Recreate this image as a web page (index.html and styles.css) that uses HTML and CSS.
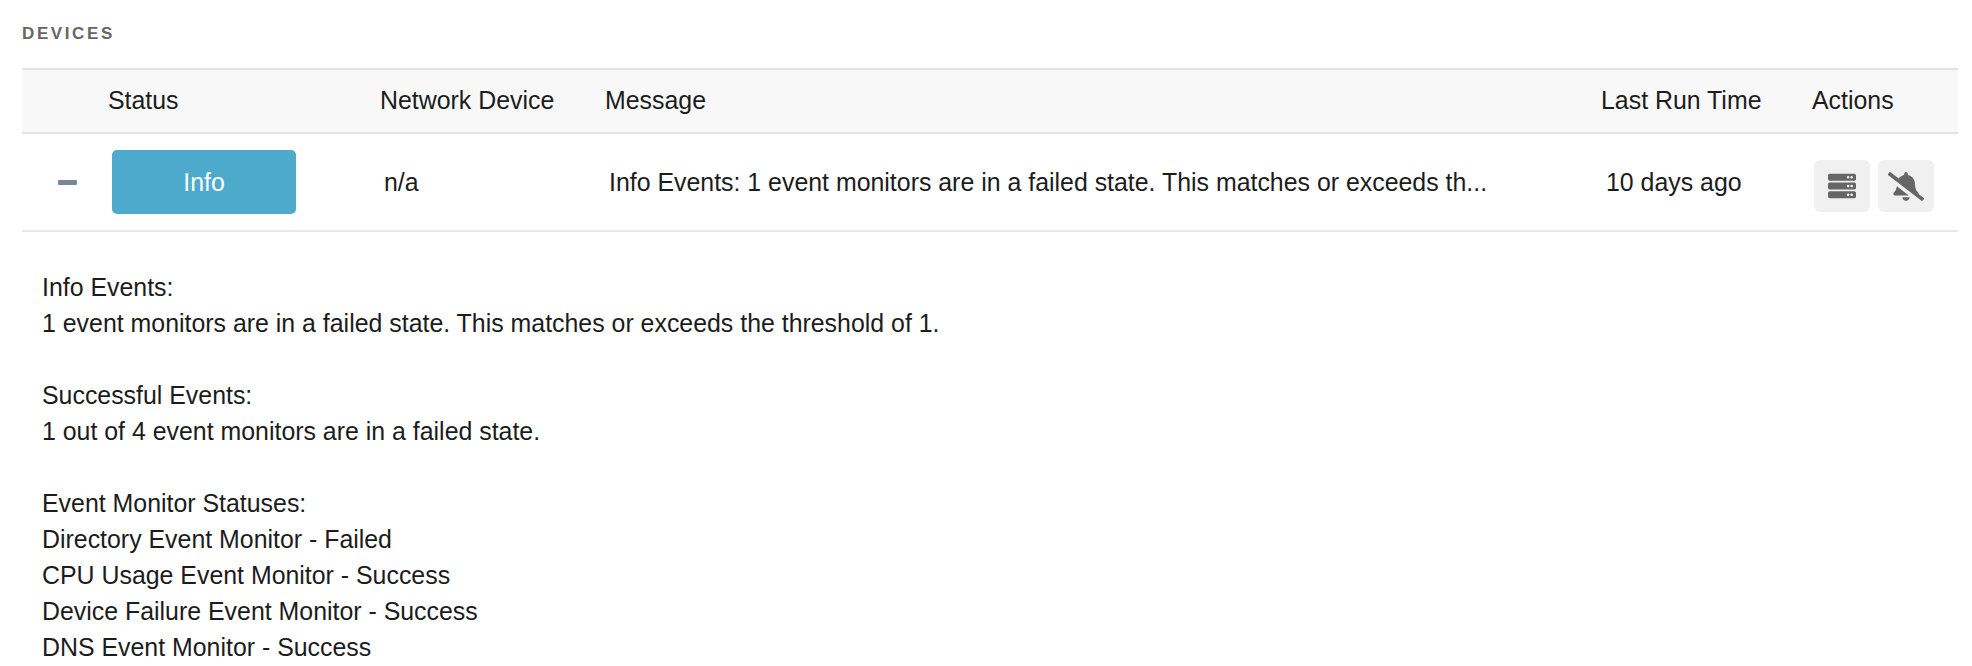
FILE: index.html
```html
<!DOCTYPE html>
<html lang="en">

<head>
    <meta charset="UTF-8">
    <title>Devices</title>

    <link rel="stylesheet" href="styles.css">

</head>

<body>
    <h2 class="titel">DEVICES</h2>
    <table class="devices">
        <colgroup>
            <col class="kol-toggle">
            <col class="kol-status">
            <col class="kol-device">
            <col class="kol-message">
            <col class="kol-time">
            <col>
        </colgroup>
        <thead>
            <tr>
                <th></th>
                <th>Status</th>
                <th>Network Device</th>
                <th>Message</th>
                <th>Last Run Time</th>
                <th>Actions</th>
            </tr>
        </thead>
        <tbody>
            <tr>
                <td><span class="collapse"></span></td>
                <td><span class="badge">Info</span></td>
                <td>n/a</td>
                <td>Info Events: 1 event monitors are in a failed state. This matches or exceeds th...</td>
                <td class="tid">10 days ago</td>
                <td>
                    <div class="actions">
                        <button class="action" aria-label="Devices">
                            <svg class="ikon-server" viewBox="0 0 512 512">
                                <path d="M480 160H32c-17.673 0-32-14.327-32-32V64c0-17.673 14.327-32 32-32h448c17.673 0 32 14.327 32 32v64c0 17.673-14.327 32-32 32zm-48-88c-13.255 0-24 10.745-24 24s10.745 24 24 24 24-10.745 24-24-10.745-24-24-24zm-64 0c-13.255 0-24 10.745-24 24s10.745 24 24 24 24-10.745 24-24-10.745-24-24-24zm112 248H32c-17.673 0-32-14.327-32-32v-64c0-17.673 14.327-32 32-32h448c17.673 0 32 14.327 32 32v64c0 17.673-14.327 32-32 32zm-48-88c-13.255 0-24 10.745-24 24s10.745 24 24 24 24-10.745 24-24-10.745-24-24-24zm-64 0c-13.255 0-24 10.745-24 24s10.745 24 24 24 24-10.745 24-24-10.745-24-24-24zm112 248H32c-17.673 0-32-14.327-32-32v-64c0-17.673 14.327-32 32-32h448c17.673 0 32 14.327 32 32v64c0 17.673-14.327 32-32 32zm-48-88c-13.255 0-24 10.745-24 24s10.745 24 24 24 24-10.745 24-24-10.745-24-24-24zm-64 0c-13.255 0-24 10.745-24 24s10.745 24 24 24 24-10.745 24-24-10.745-24-24-24z"/>
                            </svg>
                        </button>
                        <button class="action" aria-label="Mute">
                            <svg class="ikon-bell" viewBox="0 0 640 512">
                                <path d="M633.82 458.1l-90.62-70.05c.19-1.38.8-2.66.8-4.05.05-7.55-2.61-15.27-8.61-21.71-19.32-20.76-55.47-51.99-55.47-154.29 0-77.7-54.48-139.9-127.94-155.16V32c0-17.67-14.32-32-31.98-32s-31.98 14.33-31.98 32v20.84c-40.33 8.38-74.66 31.07-97.59 62.57L45.47 3.37C38.49-2.05 28.43-.8 23.01 6.18L3.37 31.45C-2.05 38.42-.8 48.47 6.18 53.9l588.35 454.73c6.98 5.43 17.03 4.17 22.46-2.81l19.64-25.27c5.42-6.97 4.17-17.02-2.81-22.45zM157.23 251.54c-8.61 67.96-36.41 93.33-52.62 110.75-6 6.45-8.66 14.16-8.61 21.71.11 16.4 12.98 32 32.1 32h241.92L157.23 251.54zM320 512c35.32 0 63.97-28.65 63.97-64H256.03c0 35.35 28.65 64 63.97 64z"/>
                            </svg>
                        </button>
                    </div>
                </td>
            </tr>
        </tbody>
    </table>
    <section class="detalje">
        <p>Info Events:<br>1 event monitors are in a failed state. This matches or exceeds the threshold of 1.</p>
        <p>Successful Events:<br>1 out of 4 event monitors are in a failed state.</p>
        <p>Event Monitor Statuses:<br>Directory Event Monitor - Failed<br>CPU Usage Event Monitor - Success<br>Device Failure Event Monitor - Success<br>DNS Event Monitor - Success</p>
    </section>
</body></html>
```

FILE: styles.css
```css
body {
    margin: 0;
    padding: 0 14px 0 22px;
    background: white;
    color: #1c1c1c;
    font-family: "Liberation Sans", Arial, sans-serif;
    font-size: 24.9px;
}

.titel {
    margin: 0;
    padding-top: 25px;
    height: 68px;
    box-sizing: border-box;
    color: #666;
    font-size: 17px;
    line-height: 18px;
    font-weight: bold;
    letter-spacing: 2.6px;
}

.devices {
    width: 100%;
    table-layout: fixed;
    border-collapse: collapse;
}

.kol-toggle {
    width: 86px;
}

.kol-status {
    width: 272px;
}

.kol-device {
    width: 225px;
}

.kol-message {
    width: 996px;
}

.kol-time {
    width: 211px;
}

th {
    height: 60px;
    padding: 0 0 2px;
    background: #f8f8f8;
    border-top: 2px solid #e2e2e2;
    border-bottom: 2px solid #e2e2e2;
    font-weight: normal;
    text-align: left;
}

td {
    height: 96px;
    padding: 0 0 0 4px;
    border-bottom: 2px solid #e6e6e6;
}

td.tid {
    padding-left: 5px;
}

.collapse {
    display: block;
    width: 19px;
    height: 5px;
    margin-left: 32px;
    background: #78869c;
    border-radius: 1px;
}

.badge {
    display: block;
    width: 184px;
    height: 64px;
    line-height: 64px;
    background: #4eaacd;
    border-radius: 5px;
    color: white;
    text-align: center;
}

.actions {
    display: flex;
    gap: 8px;
    margin: 8px 0 0 -2px;
}

.action {
    display: flex;
    align-items: center;
    justify-content: center;
    width: 56px;
    height: 52px;
    padding: 0;
    border: none;
    border-radius: 6px;
    background: #f0f0f0;
}

.action svg {
    fill: #666;
}

.ikon-server {
    width: 28px;
    height: 28px;
}

.ikon-bell {
    width: 36px;
    height: 29px;
}

.detalje {
    padding: 37px 0 0 20px;
    line-height: 36px;
}

.detalje p {
    margin: 0 0 36px;
}

.detalje p:last-child {
    margin-bottom: 0;
}
```
